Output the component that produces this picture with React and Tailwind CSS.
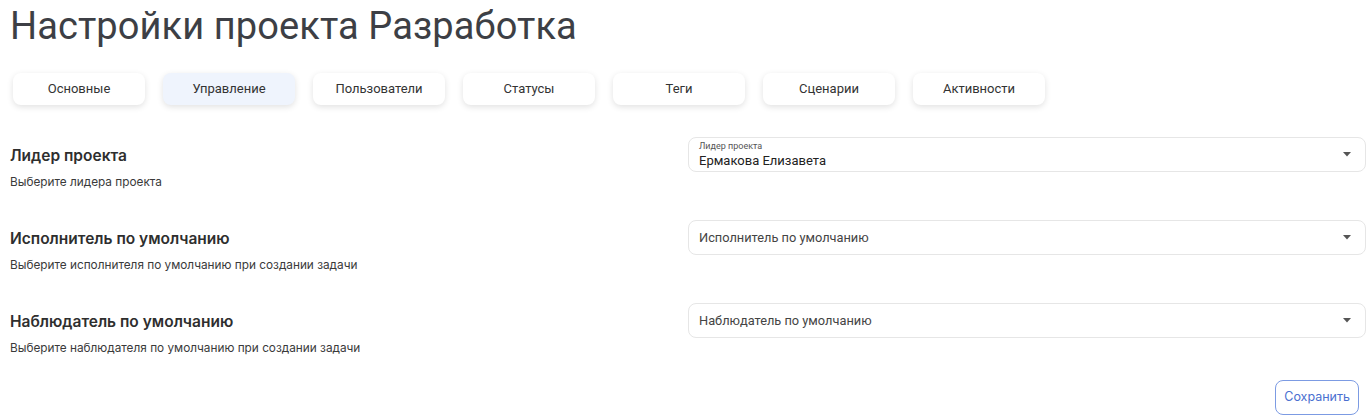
import React from "react";

const tabs = ["Основные", "Управление", "Пользователи", "Статусы", "Теги", "Сценарии", "Активности"];

const rows = [
  {
    title: "Лидер проекта",
    hint: "Выберите лидера проекта",
    label: "Лидер проекта",
    value: "Ермакова Елизавета",
  },
  {
    title: "Исполнитель по умолчанию",
    hint: "Выберите исполнителя по умолчанию при создании задачи",
    placeholder: "Исполнитель по умолчанию",
  },
  {
    title: "Наблюдатель по умолчанию",
    hint: "Выберите наблюдателя по умолчанию при создании задачи",
    placeholder: "Наблюдатель по умолчанию",
  },
];

function Caret() {
  return (
    <svg width="8" height="5" viewBox="0 0 8 5" className="shrink-0">
      <path d="M0 0h8L4 4.5z" fill="#555" />
    </svg>
  );
}

function Select({ label, value, placeholder }) {
  return (
    <div className="h-[35px] flex items-center justify-between rounded-lg border border-[#e6e6e6] pl-[10px] pr-[14px] font-['Roboto',sans-serif]">
      {value ? (
        <div className="flex flex-col leading-none">
          <span className="text-[9px] text-[#555] mb-[3px]">{label}</span>
          <span className="text-[13px] text-[#222]">{value}</span>
        </div>
      ) : (
        <span className="text-[12.8px] text-[#444]">{placeholder}</span>
      )}
      <Caret />
    </div>
  );
}

export default function App() {
  return (
    <div className="w-[1371px] h-[418px] bg-white pl-[10px] pr-[5px] overflow-hidden font-['Inter',sans-serif]">
      <h1 className="pt-[3px] text-[38px] leading-[47px] text-[#3d3f45] font-['Roboto',sans-serif] tracking-[0.1px]">
        Настройки проекта Разработка
      </h1>

      <div className="flex gap-[18px] mt-[23px] ml-[3px]">
        {tabs.map((t, i) => (
          <button
            key={t}
            className={`w-[132px] h-[32px] rounded-lg text-[13px] text-[#333] font-['Roboto',sans-serif] shadow-[0_2px_6px_rgba(0,0,0,0.12)] ${
              i === 1 ? "bg-[#eff4fd]" : "bg-white"
            }`}
          >
            {t}
          </button>
        ))}
      </div>

      <div className="mt-[32px] flex flex-col gap-[30px]">
        {rows.map((r) => (
          <div key={r.title} className="grid grid-cols-2">
            <div className="pt-[7px]">
              <div className="text-[15.5px] leading-[24px] font-semibold text-[#2e2e2e]">{r.title}</div>
              <div className="mt-[6px] text-[11.8px] leading-[16px] text-[#3a3a3a]">{r.hint}</div>
            </div>
            <Select label={r.label} value={r.value} placeholder={r.placeholder} />
          </div>
        ))}
      </div>

      <div className="flex justify-end pr-[7px] mt-[24px]">
        <button className="h-[35px] px-[8px] rounded-lg border border-[#7c9be3] text-[12.5px] text-[#4a6fd0] bg-white">
          Сохранить
        </button>
      </div>
    </div>
  );
}
